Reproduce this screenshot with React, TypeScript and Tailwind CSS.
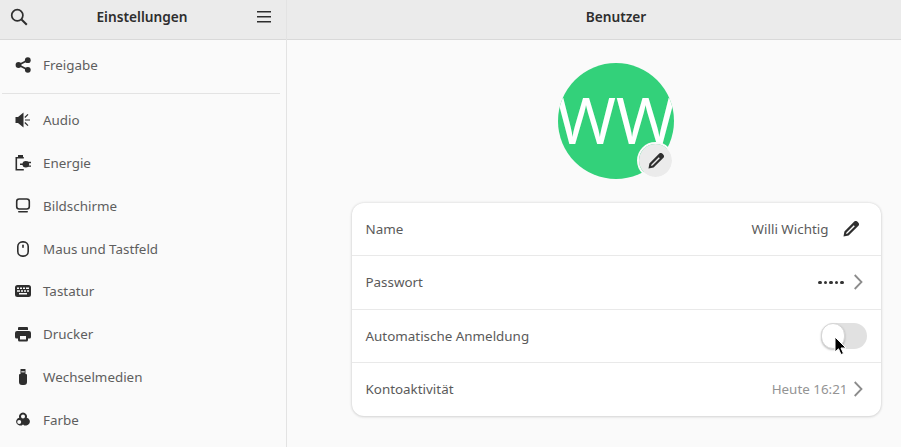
import { ReactNode } from "react";

const Ico = ({ children, size = 16 }: { children: ReactNode; size?: number }) => (
  <svg width={size} height={size} viewBox="0 0 16 16" fill="#2e2e2e" className="shrink-0">
    {children}
  </svg>
);

const ShareIcon = () => (
  <Ico>
    <circle cx="3.5" cy="8" r="2.9" />
    <circle cx="12.8" cy="3.2" r="2.9" />
    <circle cx="12.8" cy="12.8" r="2.9" />
    <path d="M3.5 8 12.8 3.2M3.5 8l9.3 4.8" stroke="#2e2e2e" strokeWidth="1.8" />
  </Ico>
);

const AudioIcon = () => (
  <Ico>
    <path d="M0.500 5h2.500L8.500 0.500v15L3 11H0.500z" />
    <path d="M10 8h5M9.800 5.500l3.200-3.200M9.800 10.500l3.200 3.200" stroke="#2e2e2e" strokeWidth="1.200" fill="none" />
  </Ico>
);

const PowerIcon = () => (
  <Ico>
    <rect x="3" y="0" width="5" height="2" />
    <path d="M8.800 2.800H1.300v12h7.500" fill="none" stroke="#2e2e2e" strokeWidth="1.600" />
    <circle cx="10.800" cy="9.300" r="3.300" />
    <path d="M12 7.500h4M12 11.100h4M5 9.300h3" fill="none" stroke="#2e2e2e" strokeWidth="1.400" />
  </Ico>
);

const DisplayIcon = () => (
  <Ico>
    <rect x="1.700" y="1" width="12.600" height="10" rx="2.500" fill="none" stroke="#2e2e2e" strokeWidth="1.600" />
    <rect x="3" y="13" width="10" height="1.600" rx=".8" />
  </Ico>
);

const MouseIcon = () => (
  <Ico>
    <rect x="2.800" y=".9" width="10.400" height="14.200" rx="4.600" fill="none" stroke="#2e2e2e" strokeWidth="1.600" />
    <rect x="7.200" y="3.500" width="1.600" height="3.500" rx=".8" />
  </Ico>
);

const KeyboardIcon = () => (
  <Ico>
    <path
      fillRule="evenodd"
      d="M2.500 2h11A2.500 2.500 0 0 1 16 4.500v7a2.500 2.500 0 0 1-2.500 2.500h-11A2.500 2.500 0 0 1 0 11.500v-7A2.500 2.500 0 0 1 2.500 2zM2 4.500V6h2V4.500zm3 0V6h2V4.500zm3 0V6h2V4.500zm3 0V6h3V4.500zM2 7.250v1.500h3v-1.500zm4 0v1.500h2v-1.500zm3 0v1.500h2v-1.500zm3 0v1.500h2v-1.500zM4 10v1.500h8V10z"
    />
  </Ico>
);

const PrinterIcon = () => (
  <Ico>
    <path
      fillRule="evenodd"
      d="M4 1h8a1 1 0 0 1 1 1v2H3V2a1 1 0 0 1 1-1zM2 5h12a2 2 0 0 1 2 2v4a1.500 1.500 0 0 1-1.500 1.500H13V14a1.500 1.500 0 0 1-1.500 1.500h-7A1.500 1.500 0 0 1 3 14v-1.500H1.500A1.500 1.500 0 0 1 0 11V7a2 2 0 0 1 2-2zm3 5v3.500h6V10z"
    />
  </Ico>
);

const UsbIcon = () => (
  <Ico>
    <path
      fillRule="evenodd"
      d="M5.500 0h5v5H11a1 1 0 0 1 1 1v7a3 3 0 0 1-3 3H7a3 3 0 0 1-3-3V6a1 1 0 0 1 1-1h.5zM6.500 2v1.500H7.700V2zm1.800 0v1.500H9.500V2z"
    />
  </Ico>
);

const ColorIcon = () => (
  <Ico>
    <path
      fillRule="evenodd"
      d="M8 .5a4 4 0 0 1 3.800 5.200 4 4 0 1 1-3.800 6.700 4 4 0 1 1-3.800-6.700A4 4 0 0 1 8 .5zm0 2a2 2 0 1 0 0 4 2 2 0 0 0 0-4zM4.200 8a2 2 0 1 0 0 4 2 2 0 0 0 0-4z"
    />
  </Ico>
);

const PencilIcon = () => (
  <svg width="16" height="16" viewBox="0 0 16 16" className="shrink-0">
    <path
      fillRule="evenodd"
      fill="#2e2e2e"
      d="M11 .8a2.500 2.500 0 0 1 3.500 0l.7.7a2.500 2.500 0 0 1 0 3.500L5.600 14.600.5 15.500l.9-5.100zM10.800 4.200l-7.300 7.300-.5 1.500 1.500-.5 7.300-7.300z"
    />
  </svg>
);

const Chevron = () => (
  <svg width="16" height="16" viewBox="0 0 16 16" fill="none" className="shrink-0">
    <path d="M4.700 1 11.500 8l-6.800 7" stroke="#8c8c8c" strokeWidth="1.800" />
  </svg>
);

const sideItems = [
  { label: "Audio", icon: <AudioIcon /> },
  { label: "Energie", icon: <PowerIcon /> },
  { label: "Bildschirme", icon: <DisplayIcon /> },
  { label: "Maus und Tastfeld", icon: <MouseIcon /> },
  { label: "Tastatur", icon: <KeyboardIcon /> },
  { label: "Drucker", icon: <PrinterIcon /> },
  { label: "Wechselmedien", icon: <UsbIcon /> },
  { label: "Farbe", icon: <ColorIcon /> },
];

const SideRow = ({ label, icon }: { label: string; icon: ReactNode }) => (
  <div className="flex h-[42.8px] shrink-0 items-center gap-[12px] pl-[15px] text-[#5e5e5e]">
    {icon}
    <span>{label}</span>
  </div>
);

const CardRow = ({ children, last }: { children: ReactNode; last?: boolean }) => (
  <div className={`flex h-[53.25px] items-center justify-between pl-[14px] pr-[15px] ${last ? "" : "border-b border-[#e9e9e9]"}`}>
    {children}
  </div>
);

export default function App() {
  return (
    <div className="flex h-[447px] w-[901px] overflow-hidden bg-[#fafafa] font-['Noto_Sans',sans-serif] text-[13.4px] text-[#5a5a5a]">
      <aside className="flex w-[287px] shrink-0 flex-col border-r border-[#e3e3e3]">
        <header className="flex h-[40px] shrink-0 items-center justify-between border-b border-[#d9d9d9] bg-[#ebebeb] pb-[5px] pl-[10px] pr-[14px] text-[13.7px] text-[#2e2e2e]">
          <svg width="18" height="18" viewBox="0 0 18 18" fill="none" stroke="#2e2e2e" strokeWidth="1.700">
            <circle cx="7.300" cy="7.300" r="5.600" />
            <path d="m11.500 11.500 5.300 5.300" strokeWidth="2" />
          </svg>
          <span className="font-semibold">Einstellungen</span>
          <svg width="16" height="14" viewBox="0 0 16 14" fill="#2e2e2e">
            <rect x="1" y="1" width="14" height="1.500" />
            <rect x="1" y="6" width="14" height="1.500" />
            <rect x="1" y="11" width="14" height="1.500" />
          </svg>
        </header>
        <div className="flex flex-col pt-[4px]">
          <SideRow label="Freigabe" icon={<ShareIcon />} />
          <div className="ml-[2px] mr-[6px] mt-[6px] mb-[5px] h-px bg-[#e3e3e3]" />
          {sideItems.map((item) => (
            <SideRow key={item.label} label={item.label} icon={item.icon} />
          ))}
        </div>
      </aside>

      <main className="flex w-[658px] shrink-0 flex-col">
        <header className="flex h-[40px] shrink-0 items-center justify-center border-b border-[#d9d9d9] bg-[#ebebeb] pb-[5px] text-[13.7px] font-semibold text-[#2e2e2e]">
          Benutzer
        </header>
        <div className="flex flex-col items-center pt-[23px]">
          <div className="relative h-[116px] w-[116px]">
            <div className="flex h-full w-full items-center justify-center overflow-hidden rounded-full bg-[#33d17a] pb-[2px] text-[64px] leading-none text-white">
              <span className="whitespace-nowrap">WW</span>
            </div>
            <div className="absolute bottom-0 right-0 flex h-[37px] w-[37px] items-center justify-center rounded-full border-2 border-[#fafafa] bg-[#ebebeb] bg-clip-padding">
              <PencilIcon />
            </div>
          </div>

          <div className="mt-[24px] w-[529px] rounded-[12px] bg-white shadow-[0_0_3px_rgba(0,0,0,0.14),0_1px_3px_rgba(0,0,0,0.1)]">
            <CardRow>
              <span>Name</span>
              <div className="flex items-center gap-[14px] pr-[7px]">
                <span>Willi Wichtig</span>
                <PencilIcon />
              </div>
            </CardRow>
            <CardRow>
              <span>Passwort</span>
              <div className="flex items-center gap-[6px]">
                <div className="flex gap-[2px]">
                  {[0, 1, 2, 3, 4].map((i) => (
                    <span key={i} className="h-[3.500px] w-[3.500px] rounded-full bg-[#333333]" />
                  ))}
                </div>
                <Chevron />
              </div>
            </CardRow>
            <CardRow>
              <span>Automatische Anmeldung</span>
              <div className="relative -mr-[1px] h-[26px] w-[46px] rounded-full bg-[#e1e1e1]">
                <div className="absolute left-0 top-0 h-[26px] w-[24px] rounded-full border border-[#d6d6d6] bg-white shadow-[0_1px_2px_rgba(0,0,0,0.25)]" />
                <svg width="13" height="20" viewBox="0 0 13 20" className="absolute left-[13px] top-[13px]">
                  <path d="M1 1v15l3.500-3.200L7 18.500l2.500-1L7 12h5z" fill="#000" stroke="#fff" strokeWidth="1" />
                </svg>
              </div>
            </CardRow>
            <CardRow last>
              <span>Kontoaktivität</span>
              <div className="flex items-center gap-[2px] text-[#949494]">
                <span>Heute 16:21</span>
                <Chevron />
              </div>
            </CardRow>
          </div>
        </div>
      </main>
    </div>
  );
}
